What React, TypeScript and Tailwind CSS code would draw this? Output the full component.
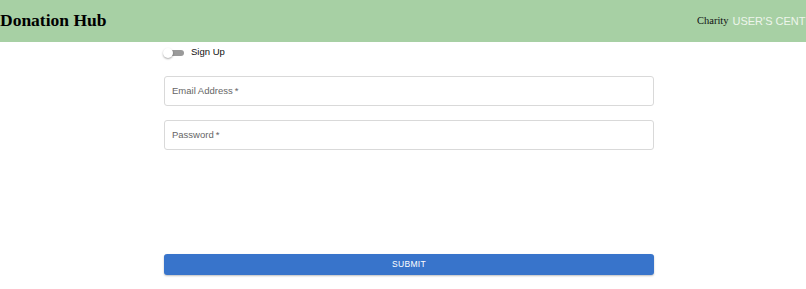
import { useState, type ReactNode } from 'react'

function Field({ label }: { label: string }): ReactNode {
  return (
    <div className="flex h-[30px] items-center rounded-[3px] border border-[#d9d9d9] bg-white px-[7px]">
      <span className="text-[9.5px] text-[#666]">
        {label}
        <span className="ml-[2px]">*</span>
      </span>
    </div>
  )
}

export default function App(): ReactNode {
  const [signUp, setSignUp] = useState(false)

  return (
    <div className="min-h-[289px] bg-white font-['Liberation_Sans',Arial,sans-serif]">
      <header className="flex h-[42px] items-center overflow-hidden bg-[#a7d0a4]">
        <h1 className="flex-1 font-['Liberation_Serif',serif] text-[17.5px] font-bold leading-none text-black">
          Donation Hub
        </h1>
        <div className="flex w-[109px] shrink-0 items-center gap-[4px] overflow-hidden whitespace-nowrap">
          <span className="font-['Liberation_Serif',serif] text-[10.5px] text-[#111]">Charity</span>
          <span className="text-[11px] text-[#eef5ec]">USER'S CENTER</span>
        </div>
      </header>

      <main className="ml-[164px] w-[490px] pt-[5px]">
        <label className="flex h-[11px] cursor-pointer items-center gap-[7px]">
          <button
            type="button"
            onClick={() => setSignUp(!signUp)}
            className="relative h-[10px] w-[20px] shrink-0"
          >
            <span className="absolute left-[2px] top-[2px] h-[6px] w-[18px] rounded-full bg-[#9a9a9a]" />
            <span className="absolute left-[-1px] top-0 h-[10px] w-[10px] rounded-full bg-white shadow-[0_1px_2px_rgba(0,0,0,0.35)]" />
          </button>
          <span className="text-[9.5px] text-[#111]">Sign Up</span>
        </label>

        <div className="mt-[18px] flex flex-col gap-[14px]">
          <Field label="Email Address" />
          <Field label="Password" />
        </div>

        <button
          type="button"
          className="mt-[104px] flex h-[21px] w-full items-center justify-center rounded-[3px] bg-[#3874cb] text-[8.5px] font-medium tracking-[0.3px] text-white shadow-[0_1px_2px_rgba(0,0,0,0.25)]"
        >
          SUBMIT
        </button>
      </main>
    </div>
  )
}
